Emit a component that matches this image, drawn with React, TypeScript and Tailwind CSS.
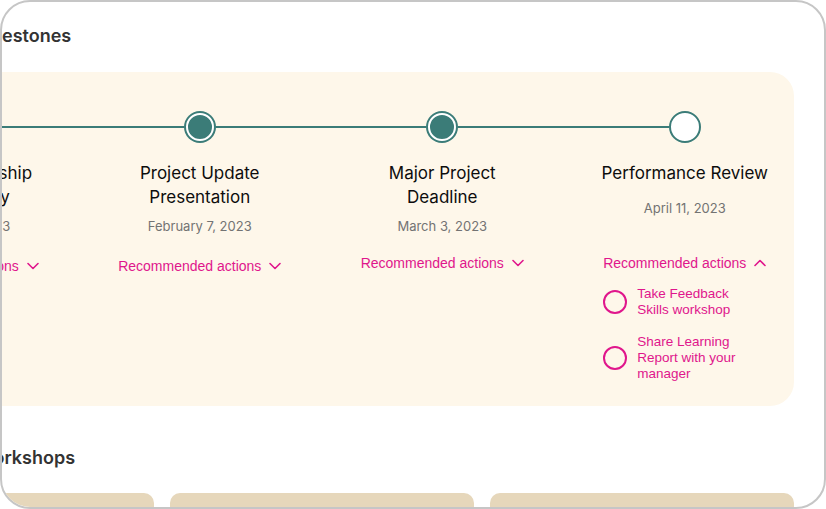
import React from 'react';

type Milestone = {
  title: string[];
  date: string;
  done: boolean;
  dateGap: string;
  recGap: string;
  open?: boolean;
};

const milestones: Milestone[] = [
  { title: ['Annual Leadership', 'Team Survey'], date: 'January 18, 2023', done: true, dateGap: 'mt-[7px]', recGap: 'mt-[20px]' },
  { title: ['Project Update', 'Presentation'], date: 'February 7, 2023', done: true, dateGap: 'mt-[7px]', recGap: 'mt-[20px]' },
  { title: ['Major Project', 'Deadline'], date: 'March 3, 2023', done: true, dateGap: 'mt-[7px]', recGap: 'mt-[17px]' },
  { title: ['Performance Review'], date: 'April 11, 2023', done: false, dateGap: 'mt-[13px]', recGap: 'mt-[35px]', open: true },
];

const actions = ['Take Feedback Skills workshop', 'Share Learning Report with your manager'];

const Chevron = ({ up }: { up?: boolean }) => (
  <svg width="12" height="8" viewBox="0 0 12 8" fill="none" className="ml-2">
    <path
      d={up ? 'M1 6.5L6 1.5L11 6.5' : 'M1 1.5L6 6.5L11 1.5'}
      stroke="#e0168c"
      strokeWidth="1.6"
      strokeLinecap="round"
      strokeLinejoin="round"
    />
  </svg>
);

const MilestoneColumn: React.FC<{ m: Milestone; first: boolean; last: boolean }> = ({ m, first, last }) => (
  <div className="flex w-[242.5px] flex-none flex-col items-center">
    <div className="flex w-full items-center">
      <div className={`h-[2px] flex-1 ${first ? '' : 'bg-[#3b7c78]'}`} />
      {m.done ? (
        <div className="flex h-[32px] w-[32px] items-center justify-center rounded-full bg-[#3b7c78]">
          <div className="h-[28px] w-[28px] rounded-full border-2 border-white bg-[#3b7c78]" />
        </div>
      ) : (
        <div className="h-[32px] w-[32px] rounded-full border-2 border-[#3b7c78] bg-white" />
      )}
      <div className={`h-[2px] flex-1 ${last ? '' : 'bg-[#3b7c78]'}`} />
    </div>
    <div className="mt-[18px] text-center text-[17px] leading-[24px] text-[#0d0d0d] font-['Inter',sans-serif]">
      {m.title.map((t) => (
        <div key={t} className="whitespace-nowrap">{t}</div>
      ))}
    </div>
    <div className={`${m.dateGap} text-[13px] leading-[20px] text-[#737373] font-['Inter',sans-serif]`}>{m.date}</div>
    <div className={`${m.recGap} flex flex-col items-start font-['Liberation_Sans',Arial,sans-serif]`}>
      <button className="flex items-center text-[14px] leading-[20px] text-[#e0168c]">
        Recommended actions
        <Chevron up={m.open} />
      </button>
      {m.open && (
        <div className="mt-[13px] flex flex-col gap-[16px]">
          {actions.map((a) => (
            <div key={a} className="flex items-center gap-[10px]">
              <div className="h-[24px] w-[24px] flex-none rounded-full border-2 border-[#e0168c]" />
              <div className="w-[112px] text-[13.5px] leading-[16px] text-[#e0168c]">{a}</div>
            </div>
          ))}
        </div>
      )}
    </div>
  </div>
);

export default function App() {
  return (
    <div className="h-[509px] w-[826px] overflow-hidden rounded-[30px] border-2 border-[#c6c6c6] bg-white">
      <div className="flex flex-col pt-[22px]">
        <h2 className="ml-[-26px] text-[18px] font-semibold leading-[24px] text-[#333333] font-['Inter',sans-serif]">
          Milestones
        </h2>
        <div className="ml-[-166px] mt-[24px] flex h-[334px] w-[958px] overflow-hidden rounded-[24px] bg-[#fef7ea] pt-[39px]">
          {milestones.map((m, i) => (
            <MilestoneColumn key={m.date} m={m} first={i === 0} last={i === milestones.length - 1} />
          ))}
        </div>
        <h2 className="ml-[-26px] mt-[40px] text-[18px] font-semibold leading-[24px] text-[#333333] font-['Inter',sans-serif]">
          Workshops
        </h2>
        <div className="ml-[-152px] mt-[23px] flex gap-[16px]">
          {[0, 1, 2].map((i) => (
            <div key={i} className="h-[60px] w-[304px] flex-none rounded-t-[10px] bg-[#e6d7bb]" />
          ))}
        </div>
      </div>
    </div>
  );
}
